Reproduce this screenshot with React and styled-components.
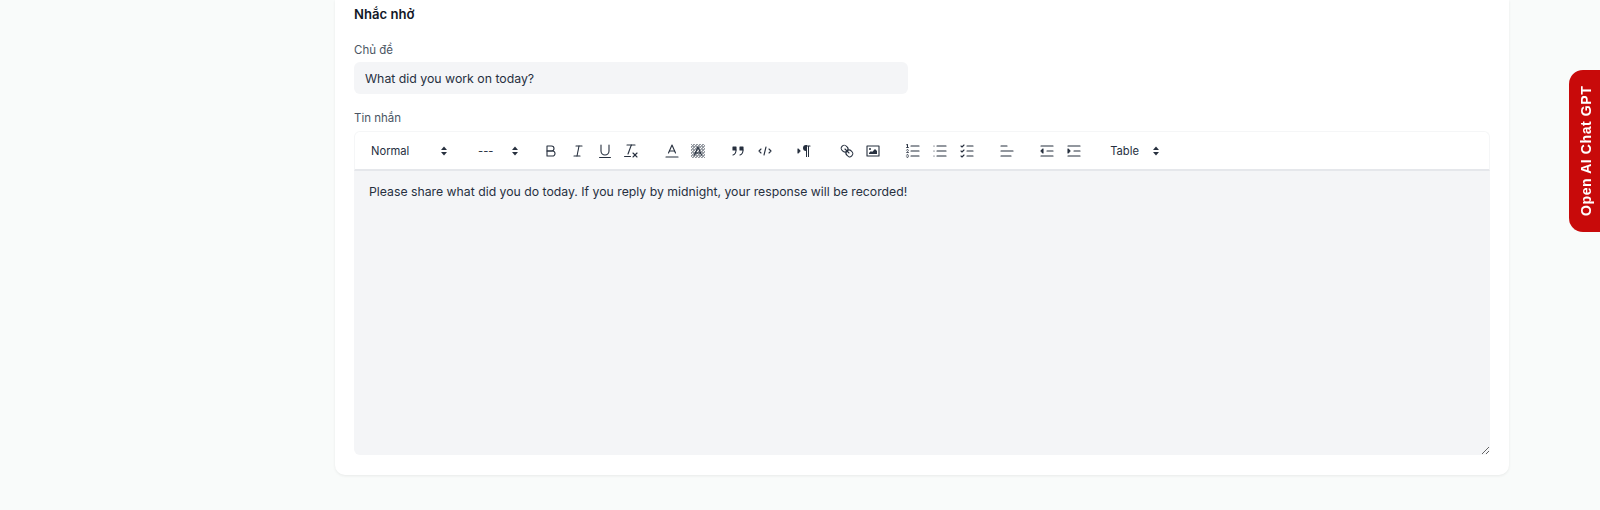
import styled, {createGlobalStyle} from 'styled-components'

const Global = createGlobalStyle`
  html, body {
    margin: 0;
    padding: 0;
    height: 510px;
    overflow: hidden;
    background: #f9fbfa;
    font-family: Inter, "Liberation Sans", sans-serif;
    color: #1f2937;
  }
`

const Page = styled.div`
  height: 510px;
  padding-left: 335px;
  box-sizing: border-box;
`

const Card = styled.section`
  width: 1174px;
  height: 475px;
  box-sizing: border-box;
  padding: 0 19px;
  background: #fff;
  border-radius: 0 0 10px 10px;
  box-shadow: 0 1px 3px rgba(0, 0, 0, 0.07);
`

const Title = styled.h3`
  margin: 0;
  padding-top: 5px;
  font-size: 13.1px;
  line-height: 18px;
  font-weight: 600;
  color: #111827;
`

const Label = styled.label`
  display: block;
  font-size: 11.5px;
  line-height: 16px;
  color: #4b5563;
  margin-top: ${p => p.$top}px;
`

const Input = styled.input`
  display: block;
  width: 554px;
  height: 32px;
  margin-top: 4px;
  padding: 0 11px;
  box-sizing: border-box;
  border: 0;
  outline: 0;
  border-radius: 6px;
  background: #f4f5f7;
  font: 400 12.3px Inter, sans-serif;
  color: #27303f;
`

const Editor = styled.div`
  margin-top: 5px;
`

const Toolbar = styled.div`
  display: flex;
  align-items: center;
  height: 40px;
  box-sizing: border-box;
  padding-left: 8px;
  border: 1px solid #f5f6f7;
  border-bottom: 2px solid #e5e7eb;
  border-radius: 6px 6px 0 0;
`

const Picker = styled.div`
  display: flex;
  align-items: center;
  justify-content: space-between;
  width: ${p => p.$width}px;
  margin-right: ${p => p.$gap}px;
  padding-left: 8px;
  box-sizing: border-box;
  font-size: 11.2px;
  font-weight: 400;
  color: #27303f;
`

const Group = styled.div`
  display: flex;
  margin-right: ${p => p.$gap ?? 13.5}px;
`

const Tool = styled.button`
  display: flex;
  align-items: center;
  justify-content: center;
  width: 26.7px;
  height: 24px;
  padding: 0;
  border: 0;
  background: none;

  svg {
    width: 18px;
    height: 18px;
    fill: none;
    stroke: #27303f;
    stroke-width: 1.1;
    stroke-linecap: round;
    stroke-linejoin: round;
  }
  svg .fill {
    fill: #27303f;
  }
  svg .thin {
    stroke-width: 0.8;
  }
`

const Body = styled.div`
  height: 284px;
  box-sizing: border-box;
  padding: 12px 15px;
  background: #f4f5f7;
  border-radius: 0 0 6px 6px;
  font-size: 12.25px;
  line-height: 18px;
  color: #27303f;
  overflow: auto;
  resize: vertical;
`

const ChatTab = styled.button`
  position: fixed;
  top: 70px;
  right: 0;
  width: 31px;
  height: 162px;
  padding: 0 3px 0 0;
  border: 0;
  background: #c80a0a;
  color: #fff;
  font: 700 14px "Liberation Sans", Arial, sans-serif;
  letter-spacing: 0.6px;
  writing-mode: vertical-rl;
  transform: rotate(180deg);
  border-radius: 0 14px 14px 0;
  display: flex;
  align-items: center;
  justify-content: center;
`

const Arrows = () => (
  <svg width="8" height="12" viewBox="0 0 8 12">
    <polygon points="4,1.5 7,5 1,5" fill="#27303f"/>
    <polygon points="4,10.5 7,7 1,7" fill="#27303f"/>
  </svg>
)

const Icon = ({children}) => (
  <Tool type="button"><svg viewBox="0 0 18 18">{children}</svg></Tool>
)

const App = () => (
  <>
    <Global/>
    <Page>
      <Card>
        <Title>Nhắc nhở</Title>
        <Label $top={19}>Chủ đề</Label>
        <Input readOnly value="What did you work on today?"/>
        <Label $top={16}>Tin nhắn</Label>
        <Editor>
          <Toolbar>
            <Picker $width={85} $gap={22}><span>Normal</span><Arrows/></Picker>
            <Picker $width={49} $gap={19}><span>---</span><Arrows/></Picker>
            <Group>
              <Icon>
                <path d="M5,4H9.5A2.5,2.5,0,0,1,12,6.5v0A2.5,2.5,0,0,1,9.5,9H5V4Z"/>
                <path d="M5,9h5.5A2.5,2.5,0,0,1,13,11.5v0A2.5,2.5,0,0,1,10.5,14H5V9Z"/>
              </Icon>
              <Icon>
                <line x1="7" x2="13" y1="4" y2="4"/>
                <line x1="5" x2="11" y1="14" y2="14"/>
                <line x1="8" x2="10" y1="14" y2="4"/>
              </Icon>
              <Icon>
                <path d="M5,3V9a4,4,0,0,0,4,4H9a4,4,0,0,0,4-4V3"/>
                <rect className="fill" stroke="none" x="3" y="15" width="12" height="1" rx=".5"/>
              </Icon>
              <Icon>
                <line x1="5" x2="13" y1="3" y2="3"/>
                <line x1="6" x2="9.35" y1="12" y2="3"/>
                <line x1="11" x2="15" y1="11" y2="15"/>
                <line x1="15" x2="11" y1="11" y2="15"/>
                <rect className="fill" stroke="none" x="2" y="14" width="7" height="1" rx=".5"/>
              </Icon>
            </Group>
            <Group>
              <Icon>
                <line x1="3" x2="15" y1="15" y2="15"/>
                <polyline points="5.5 11 9 3 12.5 11"/>
                <line x1="11.63" x2="6.38" y1="9" y2="9"/>
              </Icon>
              <Icon>
                <defs>
                  <pattern id="hatch" width="3" height="3" patternUnits="userSpaceOnUse">
                    <rect width="1.2" height="1.2" fill="#374151"/>
                    <rect x="1.5" y="1.5" width="1.2" height="1.2" fill="#374151"/>
                  </pattern>
                </defs>
                <rect x="2" y="2" width="14" height="14" fill="url(#hatch)" stroke="none" opacity=".5"/>
                <polyline points="5.5 13 9 5 12.5 13"/>
                <line x1="11.63" x2="6.38" y1="11" y2="11"/>
              </Icon>
            </Group>
            <Group $gap={12.5}>
              <Icon>
                <rect className="fill" x="4" y="5" width="3" height="3"/>
                <rect className="fill" x="11" y="5" width="3" height="3"/>
                <path d="M7,8c0,4.031-3,5-3,5"/>
                <path d="M14,8c0,4.031-3,5-3,5"/>
              </Icon>
              <Icon>
                <polyline points="5 7 3 9 5 11"/>
                <polyline points="13 7 15 9 13 11"/>
                <line x1="10" x2="8" y1="5" y2="13"/>
              </Icon>
            </Group>
            <Group $gap={15.5}>
              <Icon>
                <polygon className="fill" points="3 11 5 9 3 7 3 11"/>
                <line x1="15" x2="11" y1="4" y2="4"/>
                <path className="fill" stroke="none" d="M11,3a3,3,0,0,0,0,6h1V3H11Z"/>
                <rect className="fill" stroke="none" x="11" y="4" width="1" height="11"/>
                <rect className="fill" stroke="none" x="13" y="4" width="1" height="11"/>
              </Icon>
            </Group>
            <Group>
              <Icon>
                <line x1="7" x2="11" y1="7" y2="11"/>
                <path d="M8.9,4.577a3.476,3.476,0,0,1,.36,4.679A3.476,3.476,0,0,1,4.577,8.9C3.185,7.5,2.035,6.4,4.217,4.217S7.5,3.185,8.9,4.577Z"/>
                <path d="M13.423,9.1a3.476,3.476,0,0,0-4.679-.36,3.476,3.476,0,0,0,.36,4.679c1.392,1.392,2.5,2.542,4.679.36S14.815,10.5,13.423,9.1Z"/>
              </Icon>
              <Icon>
                <rect x="3" y="4" width="12" height="10"/>
                <circle className="fill" stroke="none" cx="6" cy="7" r="1"/>
                <polyline className="fill" stroke="none" points="5 12 5 11 7 9 8 10 11 7 13 9 13 12 5 12"/>
              </Icon>
            </Group>
            <Group $gap={13.5}>
              <Icon>
                <line x1="7" x2="15" y1="4" y2="4"/>
                <line x1="7" x2="15" y1="9" y2="9"/>
                <line x1="7" x2="15" y1="14" y2="14"/>
                <line className="thin" x1="2.5" x2="4.5" y1="5.5" y2="5.5"/>
                <path className="fill" stroke="none" d="M3.5,6A0.5,0.5,0,0,1,3,5.5V3.085l-0.276.138A0.5,0.5,0,0,1,2.053,3c-0.124-.247-0.023-0.324.224-0.447l1-.5A0.5,0.5,0,0,1,4,2.5v3A0.5,0.5,0,0,1,3.5,6Z"/>
                <path className="thin" d="M4.5,10.5h-2c0-.234,1.85-1.076,1.85-2.234A0.959,0.959,0,0,0,2.5,8.156"/>
                <path className="thin" d="M2.5,14.846a0.959,0.959,0,0,0,1.85-.109A0.7,0.7,0,0,0,3.75,14a0.688,0.688,0,0,0,.6-0.736,0.959,0.959,0,0,0-1.85-.109"/>
              </Icon>
              <Icon>
                <line x1="6" x2="15" y1="4" y2="4"/>
                <line x1="6" x2="15" y1="9" y2="9"/>
                <line x1="6" x2="15" y1="14" y2="14"/>
                <line x1="3" x2="3" y1="4" y2="4"/>
                <line x1="3" x2="3" y1="9" y2="9"/>
                <line x1="3" x2="3" y1="14" y2="14"/>
              </Icon>
              <Icon>
                <line x1="9" x2="15" y1="4" y2="4"/>
                <polyline points="3 4 4 5 6 3"/>
                <line x1="9" x2="15" y1="14" y2="14"/>
                <polyline points="3 14 4 15 6 13"/>
                <line x1="9" x2="15" y1="9" y2="9"/>
                <polyline points="3 9 4 10 6 8"/>
              </Icon>
            </Group>
            <Group>
              <Icon>
                <line x1="3" x2="15" y1="9" y2="9"/>
                <line x1="3" x2="13" y1="14" y2="14"/>
                <line x1="3" x2="9" y1="4" y2="4"/>
              </Icon>
            </Group>
            <Group $gap={15}>
              <Icon>
                <line x1="3" x2="15" y1="14" y2="14"/>
                <line x1="3" x2="15" y1="4" y2="4"/>
                <line x1="9" x2="15" y1="9" y2="9"/>
                <polyline className="fill" points="5 7 5 11 3 9 5 7"/>
              </Icon>
              <Icon>
                <line x1="3" x2="15" y1="14" y2="14"/>
                <line x1="3" x2="15" y1="4" y2="4"/>
                <line x1="9" x2="15" y1="9" y2="9"/>
                <polyline className="fill" points="3 7 3 11 5 9 3 7"/>
              </Icon>
            </Group>
            <Picker $width={58} $gap={0}><span>Table</span><Arrows/></Picker>
          </Toolbar>
          <Body>Please share what did you do today. If you reply by midnight, your response will be recorded!</Body>
        </Editor>
      </Card>
    </Page>
    <ChatTab type="button">Open AI Chat GPT</ChatTab>
  </>
)

export default App
